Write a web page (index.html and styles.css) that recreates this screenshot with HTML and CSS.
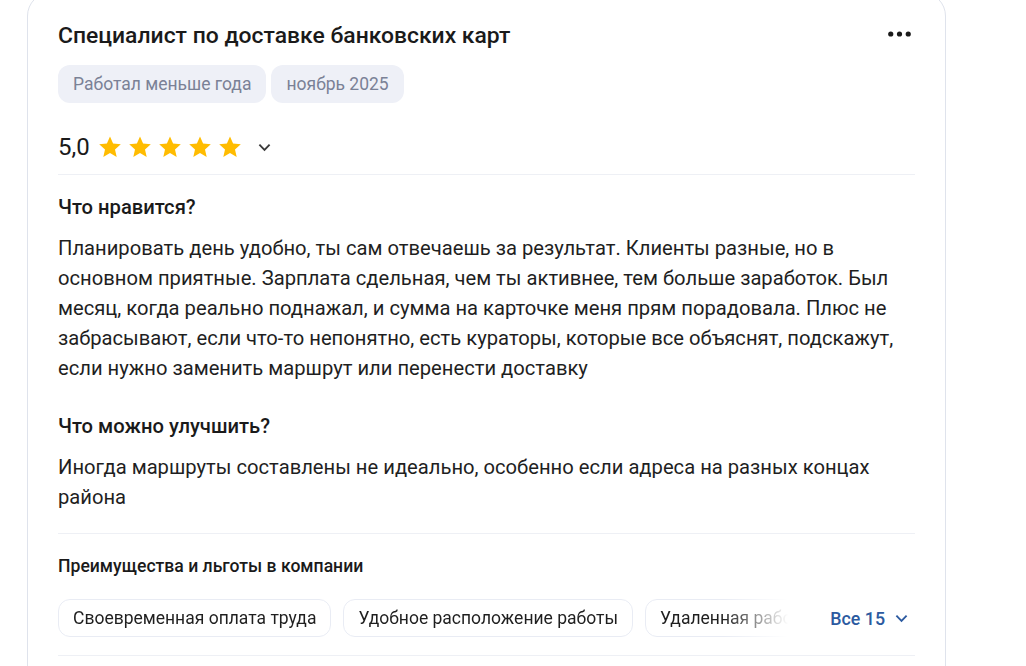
FILE: index.html
```html
<!DOCTYPE html>
<html lang="ru">
<head>
<meta charset="utf-8">
<link rel="stylesheet" href="styles.css">
</head>
<body>
<div class="card">
  <div class="head">
    <h2 class="title">Специалист по доставке банковских карт</h2>
    <button class="more" aria-label="Ещё">
      <svg width="23" height="6" viewBox="0 0 23 6"><circle cx="2.75" cy="3" r="2.6"/><circle cx="11.5" cy="3" r="2.6"/><circle cx="20.25" cy="3" r="2.6"/></svg>
    </button>
  </div>
  <div class="tags">
    <span class="tag">Работал меньше года</span>
    <span class="tag">ноябрь 2025</span>
  </div>
  <div class="rating">
    <span class="score">5,0</span>
    <span class="stars">
      <svg class="star" viewBox="0 0 24 24"><path d="M12 1.5l3.1 7.1 7.7.7-5.8 5.1 1.7 7.6L12 18l-6.7 4 1.7-7.6-5.8-5.1 7.7-.7z"/></svg>
      <svg class="star" viewBox="0 0 24 24"><path d="M12 1.5l3.1 7.1 7.7.7-5.8 5.1 1.7 7.6L12 18l-6.7 4 1.7-7.6-5.8-5.1 7.7-.7z"/></svg>
      <svg class="star" viewBox="0 0 24 24"><path d="M12 1.5l3.1 7.1 7.7.7-5.8 5.1 1.7 7.6L12 18l-6.7 4 1.7-7.6-5.8-5.1 7.7-.7z"/></svg>
      <svg class="star" viewBox="0 0 24 24"><path d="M12 1.5l3.1 7.1 7.7.7-5.8 5.1 1.7 7.6L12 18l-6.7 4 1.7-7.6-5.8-5.1 7.7-.7z"/></svg>
      <svg class="star" viewBox="0 0 24 24"><path d="M12 1.5l3.1 7.1 7.7.7-5.8 5.1 1.7 7.6L12 18l-6.7 4 1.7-7.6-5.8-5.1 7.7-.7z"/></svg>
    </span>
    <svg class="chev" viewBox="0 0 14 9"><path d="M1.5 1.5L7 7l5.5-5.5" /></svg>
  </div>
  <div class="divider"></div>
  <div class="section">
    <h3 class="sec-title">Что нравится?</h3>
    <p class="text">Планировать день удобно, ты сам отвечаешь за результат. Клиенты разные, но в основном приятные. Зарплата сдельная, чем ты активнее, тем больше заработок. Был месяц, когда реально поднажал, и сумма на карточке меня прям порадовала. Плюс не забрасывают, если что-то непонятно, есть кураторы, которые все объяснят, подскажут, если нужно заменить маршрут или перенести доставку</p>
  </div>
  <div class="section second">
    <h3 class="sec-title">Что можно улучшить?</h3>
    <p class="text">Иногда маршруты составлены не идеально, особенно если адреса на разных концах района</p>
  </div>
  <div class="divider d2"></div>
  <h4 class="perks-title">Преимущества и льготы в компании</h4>
  <div class="perks">
    <div class="chips">
      <span class="chip">Своевременная оплата труда</span>
      <span class="chip">Удобное расположение работы</span>
      <span class="chip">Удаленная работа</span>
    </div>
    <button class="all">Все 15 <svg class="chev blue" viewBox="0 0 14 9"><path d="M1.5 1.5L7 7l5.5-5.5" /></svg></button>
  </div>
  <div class="divider d3"></div>
</div>
</body>
</html>
```
FILE: styles.css
```css
* { box-sizing: border-box; }
html, body { margin: 0; padding: 0; background: #fff; }
body {
  font-family: Roboto, "Liberation Sans", Arial, sans-serif;
  color: #1f1f1f;
}
.card {
  margin: -8px 0 0 27px;
  width: 919px;
  border: 1px solid #dfe3ec;
  border-radius: 24px;
  padding: 28px 30px 60px;
  background: #fff;
}
.head {
  display: flex;
  align-items: center;
  justify-content: space-between;
}
.title {
  margin: 0;
  font-size: 22.9px;
  line-height: 29px;
  font-weight: 500;
  color: #1a1a1a;
}
.more {
  border: 0;
  background: none;
  padding: 0;
  margin: 0 4px 4px 0;
  display: flex;
  fill: #1a1a1a;
}
.tags {
  display: flex;
  gap: 5px;
  margin-top: 15px;
}
.tag {
  display: inline-flex;
  align-items: center;
  height: 38px;
  padding: 0 15px;
  background: #eef0f7;
  border-radius: 12px;
  color: #7a8196;
  font-size: 17.5px;
}
.rating {
  display: flex;
  align-items: center;
  height: 32px;
  margin-top: 28px;
}
.score {
  font-size: 24px;
  font-weight: 400;
  color: #1a1a1a;
  margin-right: 8px;
}
.stars { display: flex; gap: 6px; }
.star { width: 24px; height: 24px; fill: #ffbc00; display: block; }
.chev {
  width: 13px;
  height: 9px;
  fill: none;
  stroke: #3a3a3a;
  stroke-width: 2;
  margin-left: 16px;
}
.divider {
  height: 1px;
  background: #eef0f5;
  margin-top: 11px;
}
.section { margin-top: 20px; }
.section.second { margin-top: 31px; }
.sec-title {
  margin: 0;
  font-size: 20.2px;
  line-height: 24px;
  font-weight: 500;
  color: #1a1a1a;
}
.text {
  margin: 14px 0 0;
  font-size: 20.2px;
  line-height: 30px;
  color: #1f1f1f;
}
.d2 { margin-top: 21px; }
.perks-title {
  margin: 20px 0 0;
  font-size: 17.6px;
  line-height: 24px;
  font-weight: 500;
  color: #1a1a1a;
}
.perks {
  display: flex;
  align-items: center;
  margin-top: 21px;
}
.chips {
  display: flex;
  gap: 12px;
  width: 732px;
  flex: none;
  overflow: hidden;
  -webkit-mask-image: linear-gradient(to right, #000 665px, transparent 730px);
  mask-image: linear-gradient(to right, #000 665px, transparent 730px);
}
.chip {
  flex: none;
  height: 38px;
  display: inline-flex;
  align-items: center;
  padding: 0 14px;
  border: 1px solid #e9ecf4;
  border-radius: 12px;
  font-size: 17.5px;
  color: #1f1f1f;
  white-space: nowrap;
}
.all {
  margin-left: auto;
  border: 0;
  background: none;
  padding: 0;
  display: flex;
  align-items: center;
  font-family: inherit;
  font-size: 17.8px;
  font-weight: 500;
  color: #2c5aa0;
  white-space: nowrap;
}
.chev.blue { stroke: #2c5aa0; margin-left: 10px; margin-right: 7px; }
.d3 { margin-top: 18px; }
```
